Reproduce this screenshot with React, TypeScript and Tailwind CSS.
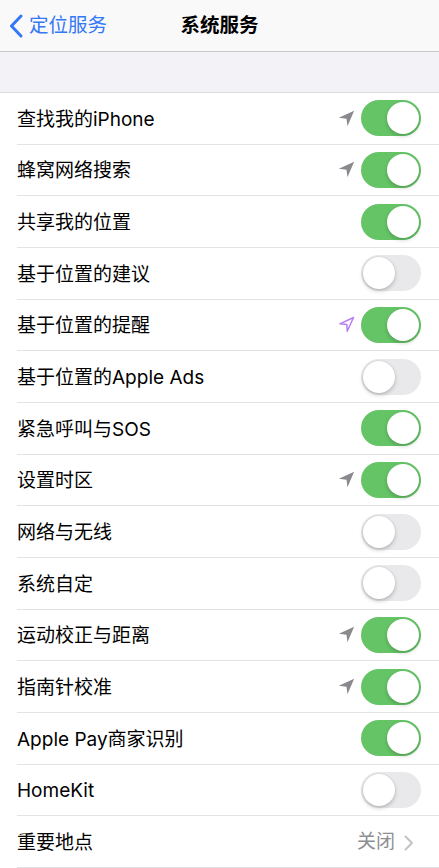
import React from "react";

type Row = { label: string; on?: boolean; arrow?: "gray" | "purple"; value?: string };

const rows: Row[] = [
  { label: "查找我的iPhone", on: true, arrow: "gray" },
  { label: "蜂窝网络搜索", on: true, arrow: "gray" },
  { label: "共享我的位置", on: true },
  { label: "基于位置的建议", on: false },
  { label: "基于位置的提醒", on: true, arrow: "purple" },
  { label: "基于位置的Apple Ads", on: false },
  { label: "紧急呼叫与SOS", on: true },
  { label: "设置时区", on: true, arrow: "gray" },
  { label: "网络与无线", on: false },
  { label: "系统自定", on: false },
  { label: "运动校正与距离", on: true, arrow: "gray" },
  { label: "指南针校准", on: true, arrow: "gray" },
  { label: "Apple Pay商家识别", on: true },
  { label: "HomeKit", on: false },
  { label: "重要地点", value: "关闭" },
];

function Arrow({ kind }: { kind: "gray" | "purple" }) {
  if (kind === "gray") {
    return (
      <svg width="17" height="17" viewBox="0 0 16 16" className="mr-[6px]">
        <path d="M15.2 0.8 L0.8 7.3 L8 8.2 L8.9 15.2 Z" fill="#8a8a8e" />
      </svg>
    );
  }
  return (
    <svg width="17" height="17" viewBox="0 0 16 16" className="mr-[6px]">
      <path
        d="M14.6 1.4 L1.8 7.4 L8.3 7.9 L8.7 14.3 Z"
        fill="none"
        stroke="#b77df4"
        strokeWidth="1.4"
        strokeLinejoin="round"
      />
    </svg>
  );
}

function Toggle({ on }: { on: boolean }) {
  return on ? (
    <div className="relative h-[36px] w-[60px] rounded-full bg-[#65c466]">
      <div className="absolute right-[2px] top-[2px] h-[32px] w-[32px] rounded-full bg-white shadow-[0_2px_4px_rgba(0,0,0,0.2)]" />
    </div>
  ) : (
    <div className="relative h-[36px] w-[60px] rounded-full bg-[#e9e9eb]">
      <div className="absolute left-[2px] top-[2px] h-[32px] w-[32px] rounded-full bg-white shadow-[0_2px_4px_rgba(0,0,0,0.22),0_0_0_0.5px_rgba(0,0,0,0.05)]" />
    </div>
  );
}

export default function App() {
  return (
    <div
      className="w-[439px] h-[868px] overflow-hidden bg-white text-black"
      style={{ fontFamily: '"Inter", "Noto Sans CJK SC", sans-serif' }}
    >
      <div className="relative flex h-[52px] items-center border-b border-[#c6c6c9] bg-[#f9f9fa]">
        <div className="flex items-center pl-[9px] text-[#3478f6]">
          <svg width="14" height="24" viewBox="0 0 14 24">
            <path
              d="M12 2 L2.5 12 L12 22"
              fill="none"
              stroke="#3478f6"
              strokeWidth="3"
              strokeLinecap="round"
              strokeLinejoin="round"
            />
          </svg>
          <span className="ml-[6px] text-[19.5px]">定位服务</span>
        </div>
        <div className="absolute left-0 right-0 top-0 flex h-[51px] items-center justify-center text-[19.5px] font-semibold pointer-events-none">
          系统服务
        </div>
      </div>
      <div className="h-[41px] border-b border-[#dcdce0] bg-[#f2f2f7]" />
      <div>
        {rows.map((r, i) => (
          <div key={i} className="flex h-[51.67px] pl-[17px]">
            <div className="flex flex-1 items-center border-b border-[#e3e3e6] pr-[18px]">
              <span className="flex-1 pt-[2px] text-[19px] leading-none">{r.label}</span>
              {r.arrow && <Arrow kind={r.arrow} />}
              {r.value ? (
                <div className="flex items-center pt-[2px]">
                  <span className="text-[19px] text-[#8e8e93]">{r.value}</span>
                  <svg width="11" height="18" viewBox="0 0 11 18" className="ml-[8px] mr-[7px]">
                    <path
                      d="M2.5 2.5 L9 9 L2.5 15.5"
                      fill="none"
                      stroke="#c4c4c7"
                      strokeWidth="2"
                      strokeLinecap="round"
                      strokeLinejoin="round"
                    />
                  </svg>
                </div>
              ) : (
                <Toggle on={!!r.on} />
              )}
            </div>
          </div>
        ))}
      </div>
    </div>
  );
}
